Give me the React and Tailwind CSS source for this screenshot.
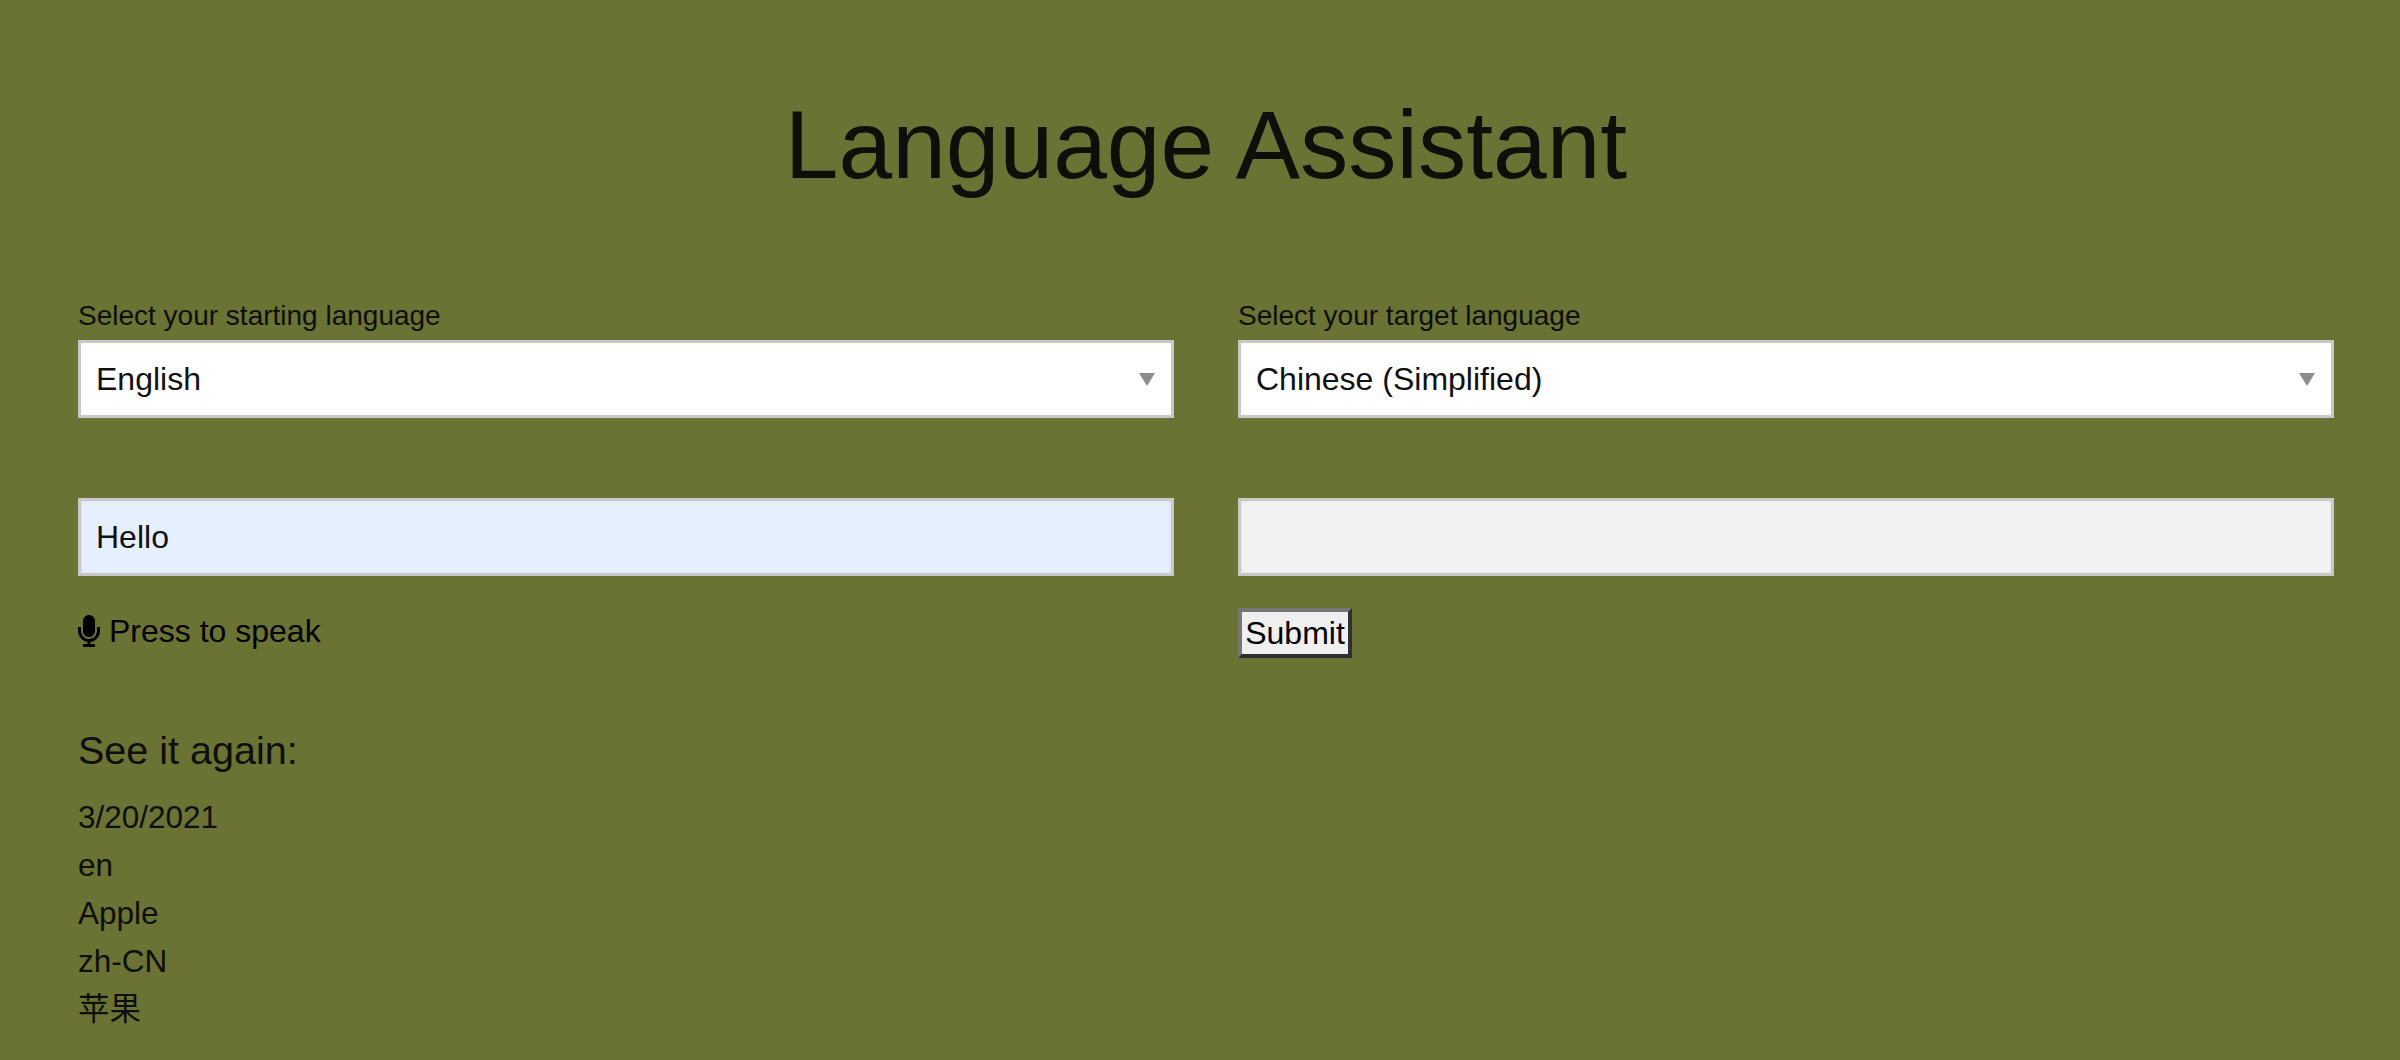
import React from 'react';
import { FaMicrophone } from 'react-icons/fa';

const fontStack = "font-['Liberation_Sans','Noto_Sans_CJK_SC',sans-serif]";

function LanguageSelect({ label, value }) {
  return (
    <div className="flex-1">
      <label className="block text-[28px] leading-[32px] text-[#0d0f08] mb-[8px]">{label}</label>
      <div className="relative">
        <select
          defaultValue={value}
          className="block w-full h-[78px] appearance-none bg-white border-[3px] border-[#c8c8c8] pl-[15px] text-[32px] text-[#111] outline-none"
        >
          <option>{value}</option>
        </select>
        <div className="absolute right-[19px] top-[33px] w-0 h-0 border-x-[8px] border-x-transparent border-t-[13px] border-t-[#8c8c8c]" />
      </div>
    </div>
  );
}

export default function App() {
  return (
    <div className={`${fontStack} min-h-[1060px] bg-[#6a7234] pl-[78px] pr-[66px] overflow-hidden`}>
      <h1 className="pt-[90px] text-center text-[96.5px] leading-[110px] text-[#0d0f08]">Language Assistant</h1>

      <div className="flex gap-[64px] mt-[100px]">
        <LanguageSelect label="Select your starting language" value="English" />
        <LanguageSelect label="Select your target language" value="Chinese (Simplified)" />
      </div>

      <div className="flex gap-[64px] mt-[80px]">
        <div className="flex-1">
          <input
            readOnly
            value="Hello"
            className="block w-full h-[78px] bg-[#e5effe] border-[3px] border-[#c8c8c8] shadow-[inset_0_0_2px_rgba(0,0,0,0.12)] pl-[15px] text-[32px] text-[#111] outline-none"
          />
          <div className="flex items-center gap-[8px] mt-[35px] text-[32px] leading-[40px] text-black">
            <FaMicrophone className="w-[24px] h-[32px] -ml-[1px]" />
            <span>Press to speak</span>
          </div>
        </div>
        <div className="flex-1">
          <input
            readOnly
            className="block w-full h-[78px] bg-[#f2f2f2] border-[3px] border-[#c8c8c8] shadow-[inset_0_0_2px_rgba(0,0,0,0.12)] outline-none"
          />
          <button className="block mt-[32px] h-[50px] w-[114px] bg-[#efefef] border-4 border-t-[#767676] border-l-[#767676] border-r-[#2f2f2f] border-b-[#2f2f2f] text-[32px] leading-none text-black">
            Submit
          </button>
        </div>
      </div>

      <h2 className="mt-[68px] text-[39.5px] leading-[48px] text-[#0d0f08]">See it again:</h2>
      <div className="mt-[19px] text-[31.5px] leading-[48px] text-[#0d0f08]">
        <div>3/20/2021</div>
        <div>en</div>
        <div>Apple</div>
        <div>zh-CN</div>
        <div>苹果</div>
      </div>
    </div>
  );
}
